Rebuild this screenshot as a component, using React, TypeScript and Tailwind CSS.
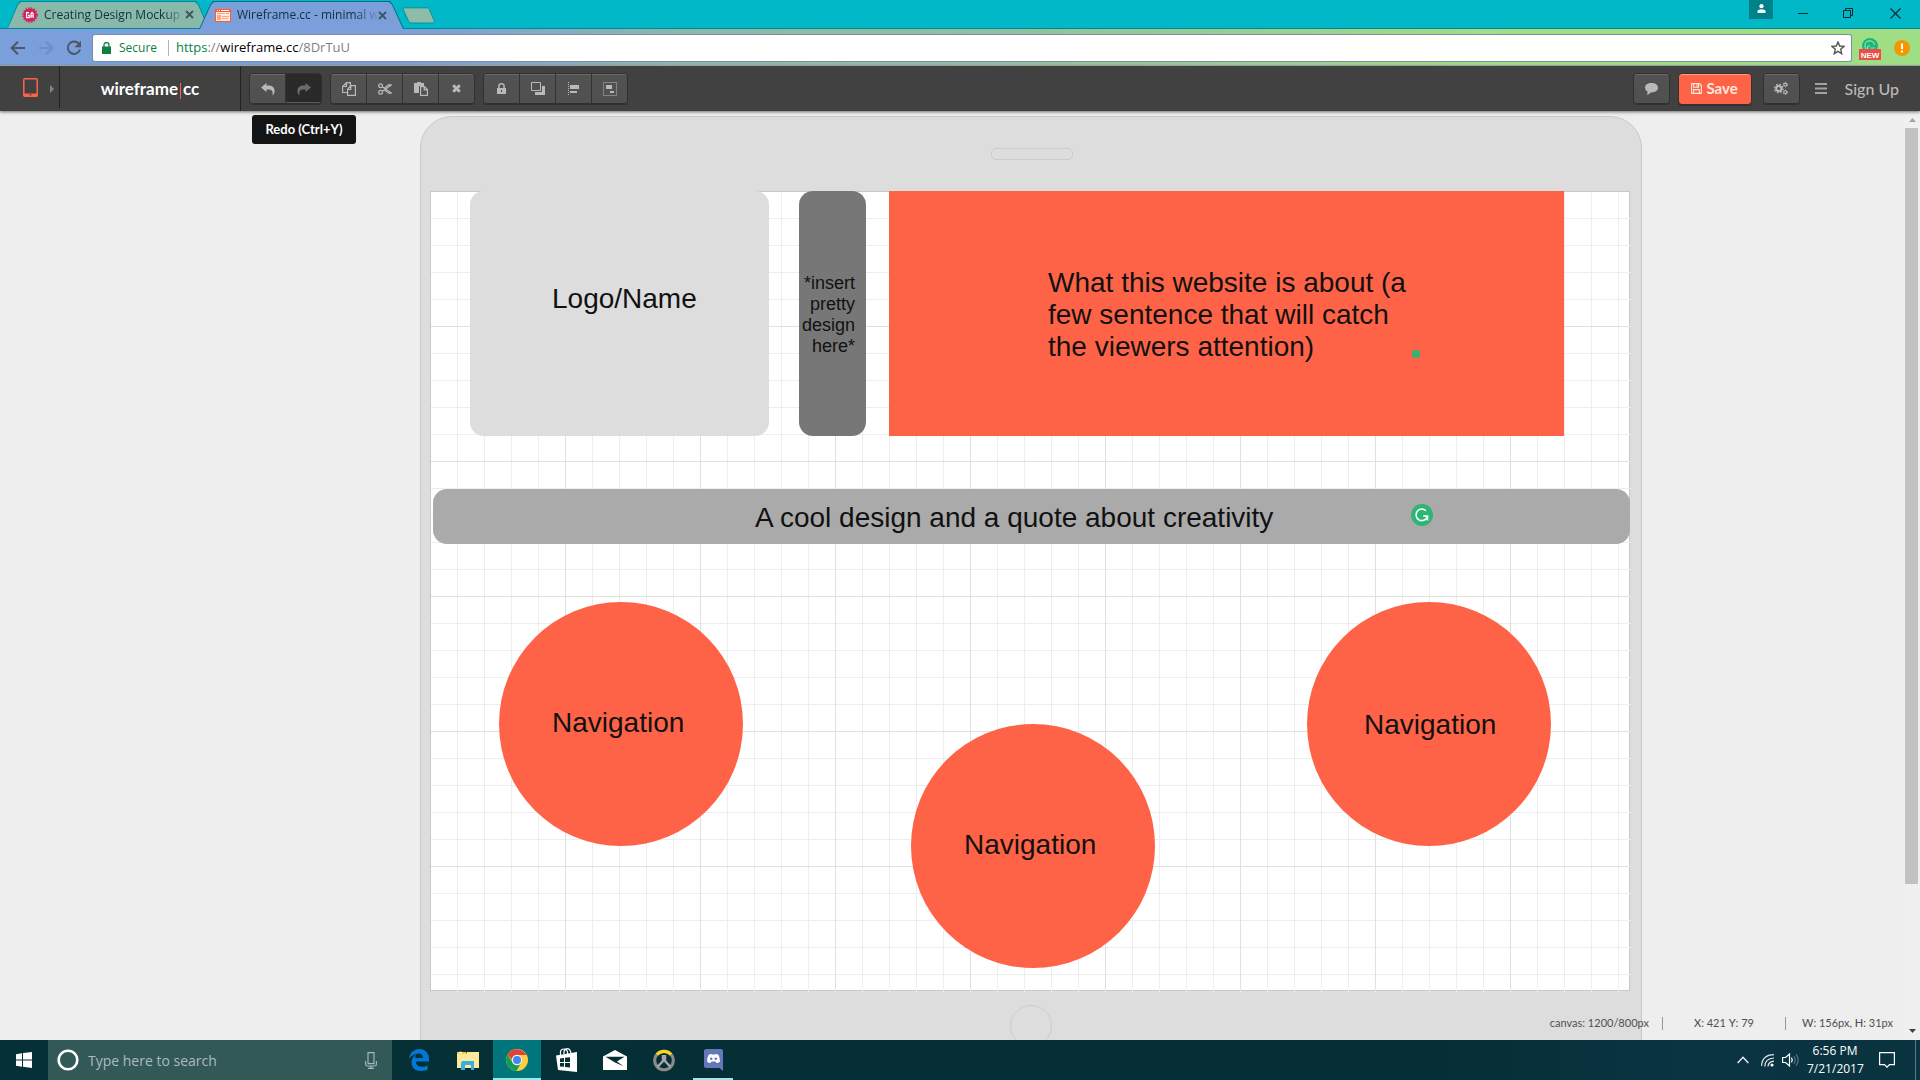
import type { ReactNode } from "react";

const UI_FONT = "font-['Open_Sans','Noto_Sans',sans-serif]";
const LATO = "font-[Lato,sans-serif]";
const ARIAL = "font-['Liberation_Sans',Arial,sans-serif]";

/* ---------- Browser chrome ---------- */

function CloseGlyph() {
  return (
    <svg width="9" height="9" viewBox="0 0 9 9" stroke="#3f5560" strokeWidth="1.8">
      <path d="M1 1l7 7M8 1l-7 7" />
    </svg>
  );
}

function GaFavicon() {
  return (
    <svg width="16" height="16" viewBox="0 0 16 16">
      <circle cx="8" cy="8" r="6.6" fill="#d3215a" />
      <circle cx="8" cy="8" r="7" fill="none" stroke="#d3215a" strokeWidth="1.6" strokeDasharray="1.6 1.2" />
      <path d="M7.2 5.6H4.6v5h2.6V8.4H6M9 11V6.8l1-1.4 1.2 1.4V11M9 8.8h2.2" fill="none" stroke="#fff" strokeWidth="1.2" />
    </svg>
  );
}

function WireframeFavicon() {
  return (
    <svg width="16" height="13" viewBox="0 0 16 13">
      <path fill="#ff5b22" d="M0 0h16v13H0z" />
      <path fill="#fff" d="M2 1h1v1H2zM4 1h1v1H4zM6 1h8v1H6z" />
      <path fill="#ffe9df" d="M1 3h14v9H1z" />
      <path fill="#ffa582" d="M2 4h8v1H2zM2 6h4v5H2zM7 7h7v1H7zM7 9h6v1H7zM11 4h3v1h-3z" />
    </svg>
  );
}

function TabStrip() {
  return (
    <div className={`flex h-[29px] items-stretch bg-[#00b8c7] pl-[7px] shadow-[inset_0_-1px_0_#008793] ${UI_FONT} text-[12px] text-[#12313c]`}>
      <div className="mt-px w-[202px] bg-[#008793] [clip-path:polygon(0_100%,10px_4px,13px_0,189px_0,192px_4px,100%_100%)]">
        <div className="flex h-[27px] items-center bg-[#89b9aa] pr-[12px] pl-[15px] [clip-path:polygon(1px_100%,11px_4px,14px_1px,188px_1px,191px_4px,201px_100%)]">
          <GaFavicon />
          <a href="#mockup" className="ml-[6px] w-[141px] whitespace-nowrap [mask-image:linear-gradient(to_right,#000_120px,transparent_142px)]">
            Creating Design Mockup
          </a>
          <button aria-label="Close tab"><CloseGlyph /></button>
        </div>
      </div>
      <div className="mt-px -ml-[10px] w-[205px] bg-[#00707d] [clip-path:polygon(0_100%,11px_4px,14px_0,191px_0,194px_4px,100%_100%)]">
        <div className="flex h-[28px] items-center bg-[#7a9fda] pl-[16px] [clip-path:polygon(1px_100%,12px_4px,15px_1px,190px_1px,193px_4px,204px_100%)]">
          <WireframeFavicon />
          <a href="#wireframe" className="ml-[6px] w-[141px] whitespace-nowrap [mask-image:linear-gradient(to_right,#000_118px,transparent_142px)]">
            Wireframe.cc - minimal w
          </a>
          <button aria-label="Close tab"><CloseGlyph /></button>
        </div>
      </div>
      <button aria-label="New tab" className="mt-[7px] -ml-[2px] h-[17px]">
        <svg width="34" height="17" viewBox="0 0 34 17">
          <path d="M2 .8h23q1.500 0 2.400 1.500l5 12q.6 1.700-1 1.700H9q-1.500 0-2.300-1.500L1.200 2.500Q.7.8 2 .8z" fill="#8dbca9" stroke="#0a8e98" />
        </svg>
      </button>
      <div className="ml-auto flex items-start">
        <button aria-label="Profile" className="flex h-[19px] w-[24px] items-center justify-center bg-[#008089]">
          <svg width="9" height="9" viewBox="0 0 9 9" fill="#fff" className="-mt-[3px]">
            <circle cx="4.500" cy="2.200" r="2.100" />
            <path d="M.5 9V7.200Q1 5.400 4.500 5.300 8 5.400 8.500 7.200V9z" />
          </svg>
        </button>
        <button aria-label="Minimize" className="ml-[7px] flex h-[26px] w-[46px] items-center justify-center">
          <svg width="10" height="10" stroke="#06282b"><path d="M0 5.500h10" /></svg>
        </button>
        <button aria-label="Restore" className="flex h-[26px] w-[44px] items-center justify-center">
          <svg width="10" height="10" fill="none" stroke="#06282b"><path d="M.5 2.500h7v7h-7zM2.500 2.500v-2h7v7h-2" /></svg>
        </button>
        <button aria-label="Close" className="flex h-[26px] w-[50px] items-center justify-center">
          <svg width="11" height="11" stroke="#06282b" strokeWidth="1.1"><path d="M.5.5l10 10M10.500.5l-10 10" /></svg>
        </button>
      </div>
    </div>
  );
}

function AddressBar() {
  return (
    <div className={`flex h-[37px] items-center border-b border-[#a9b0a9] bg-[linear-gradient(to_right,#7a9fda_0,#7a9fda_400px,#8abaa9_700px,#8fc19f_1000px,#a0de86_1500px)] pt-px pl-[10px] ${UI_FONT}`}>
      <button aria-label="Back">
        <svg width="15" height="14" viewBox="0 0 15 14" fill="none" stroke="#4f5661" strokeWidth="2"><path d="M15 7H2M8 .8L1.600 7 8 13.200" /></svg>
      </button>
      <button aria-label="Forward" className="ml-[14px]">
        <svg width="15" height="14" viewBox="0 0 15 14" fill="none" stroke="#6d8ec4" strokeWidth="2"><path d="M0 7h13M7 .8L13.400 7 7 13.200" /></svg>
      </button>
      <button aria-label="Reload" className="ml-[12px]">
        <svg width="16" height="16" viewBox="0 0 16 16"><path d="M12.600 3.500A6.200 6.200 0 1 0 14 9.500" fill="none" stroke="#4f5661" strokeWidth="2" /><path d="M15 .8v6.400H8.600z" fill="#4f5661" /></svg>
      </button>
      <div className="mr-[18px] ml-[10px] flex h-[28px] flex-1 items-center rounded-[3px] border border-[#59728f]/80 bg-white pr-[6px] pl-[9px]">
        <svg width="9" height="12" viewBox="0 0 9 12"><path d="M0 4.500h9V12H0z" fill="#0b8043" /><path d="M2 5V3a2.500 2.500 0 0 1 5 0v2" fill="none" stroke="#0b8043" strokeWidth="1.300" /></svg>
        <span className="ml-[8px] w-[40px] text-[12px] text-[#0b8043]">Secure</span>
        <span className="ml-[9px] h-[16px] w-px bg-[#b4b4b4]" />
        <div className="ml-[7px] flex-1 text-[13px] text-[#7f7f7f]" aria-label="Address">
          <span className="text-[#0b8043]">https</span>://<span className="text-black">wireframe.cc</span>/8DrTuU
        </div>
        <button aria-label="Bookmark">
          <svg width="14" height="14" viewBox="0 0 14 14" fill="none" stroke="#555" strokeWidth="1.400"><path d="M7 1l1.700 4 4.300.4-3.300 2.900 1 4.400L7 10.400l-3.700 2.300 1-4.400L1 5.400 5.300 5z" /></svg>
        </button>
      </div>
      <button aria-label="Grammarly" className="mt-[3px] -ml-[11px]">
        <svg width="22" height="22" viewBox="0 0 22 22">
          <circle cx="11" cy="8" r="8" fill="#1fb573" />
          <path d="M15.500 7A4.800 4.800 0 1 0 11 12.500M15.500 10h-4M11 7.500a2.500 2.500 0 0 0-2 4" fill="none" stroke="#8fe3ba" strokeWidth="1.200" />
          <path d="M0 11h22v11H0z" fill="#ea4e45" />
          <text x="11" y="20" textAnchor="middle" fontFamily="Liberation Sans, sans-serif" fontSize="8" fontWeight="bold" fill="#fff">NEW</text>
        </svg>
      </button>
      <button aria-label="Alert" className="mr-[10px] ml-[13px]">
        <svg width="16" height="16" viewBox="0 0 16 16"><circle cx="8" cy="8" r="8" fill="#f29900" /><path d="M7 3.500h2v5.500H7zM7 10.500h2v2H7z" fill="#fff" /></svg>
      </button>
    </div>
  );
}

/* ---------- Application toolbar ---------- */

function ToolButton({ label, disabled, children }: { label: string; disabled?: boolean; children: ReactNode }) {
  return (
    <button
      aria-label={label}
      className={
        disabled
          ? "flex h-full flex-1 items-center justify-center bg-[#292929] text-[#6a6a6a] shadow-[inset_0_-1px_0_#5a5a5a]"
          : "flex h-full flex-1 items-center justify-center border-r border-[#333] bg-[linear-gradient(#525252,#505050)] text-[#b9b9b9] shadow-[inset_0_1px_0_#6a6a6a] last:border-r-0"
      }
    >
      {children}
    </button>
  );
}

function ToolGroup({ width, children }: { width: string; children: ReactNode }) {
  return (
    <div className={`${width} flex h-[31px] overflow-hidden rounded-[4px] border border-[#303030] shadow-[0_1px_0_#303030]`}>{children}</div>
  );
}

const UndoArrow = ({ flip }: { flip?: boolean }) => (
  <svg width="14" height="12" viewBox="0 0 14 12" fill="currentColor" className={flip ? "-scale-x-100" : ""}>
    <path d="M0 4.500L5.500 0v2.500h3Q13.500 3 13.600 8q0 2.500-1.300 4-.2.300-.7 0-.2-.2 0-.7Q12.200 6.800 8 6.500H5.500V9z" />
  </svg>
);

function AppToolbar() {
  return (
    <header className={`relative z-10 flex h-[45px] items-center bg-[#414141] shadow-[0_1px_3px_rgba(0,0,0,.55)] ${LATO}`}>
      <button aria-label="Device" className="flex h-[42px] w-[60px] items-center self-start border-r border-[#222] pl-[23px]">
        <svg width="15" height="19" viewBox="0 0 15 19"><rect x=".8" y=".8" width="13.400" height="17.400" rx="1" fill="none" stroke="#ff6347" strokeWidth="1.500" /><path d="M1 15.500h13V18H1z" fill="#ff6347" /><path d="M6.500 16.300h2v1h-2z" fill="#414141" /></svg>
        <svg width="4" height="8" viewBox="0 0 4 8" className="mt-[3px] ml-[12px]"><path d="M0 0l4 4-4 4z" fill="#858585" /></svg>
      </button>
      <a href="#home" className="flex h-full w-[181px] items-center justify-center border-r border-[#222] pt-px text-[17px] font-bold text-white">
        wireframe<span className="mx-[2px] mt-[3px] h-[16px] w-px bg-[#ff6347]" />cc
      </a>
      <div className="ml-[8px] flex gap-[8px]">
        <div className="relative">
          <ToolGroup width="w-[73px]">
            <ToolButton label="Undo"><UndoArrow /></ToolButton>
            <ToolButton label="Redo" disabled><UndoArrow flip /></ToolButton>
          </ToolGroup>
          <div role="tooltip" className="absolute top-[42px] left-[3px] h-[29px] w-[104px] rounded-[3px] bg-[#141414] text-center text-[13px] leading-[28px] font-bold whitespace-nowrap text-white">
            Redo (Ctrl+Y)
          </div>
        </div>
        <ToolGroup width="w-[145px]">
          <ToolButton label="Duplicate">
            <svg width="14" height="14" viewBox="0 0 14 14" fill="none" stroke="currentColor" strokeWidth="1.200"><path d="M6 10.500H.6V4.500L4.500.6h3.900v3M4.500.6v3.900H.6M5.600 13.400V7.500l3-3.900h4.800v9.800zM8.800 3.600v3.900H5.600" /></svg>
          </ToolButton>
          <ToolButton label="Cut">
            <svg width="14" height="12" viewBox="0 0 14 12" fill="none" stroke="currentColor" strokeWidth="1.200"><circle cx="2.600" cy="2.800" r="1.900" /><circle cx="2.600" cy="9.200" r="1.900" /><path d="M4.300 3.800L13.300 10l-2.300.4-4.200-3.200M4.300 8.200L13.300 2 11 1.600 6.800 4.800" /></svg>
          </ToolButton>
          <ToolButton label="Paste">
            <svg width="14" height="14" viewBox="0 0 14 14"><path d="M0 1h3V0h4v1h3v3H5v7H0z" fill="currentColor" /><path d="M6.600 4.600h3.800l3 3v5.800H6.600zM10.200 4.600v3.200h3.200" fill="none" stroke="currentColor" strokeWidth="1.200" /></svg>
          </ToolButton>
          <ToolButton label="Delete">
            <svg width="9" height="9" viewBox="0 0 9 9" stroke="currentColor" strokeWidth="3"><path d="M1.200 1.200l6.600 6.600M7.800 1.200L1.200 7.800" /></svg>
          </ToolButton>
        </ToolGroup>
        <ToolGroup width="w-[145px]">
          <ToolButton label="Lock">
            <svg width="9" height="11" viewBox="0 0 9 11"><path d="M0 5h9v6H0z" fill="currentColor" /><path d="M1.900 5V3a2.600 2.200 0 0 1 5.200 0v2" fill="none" stroke="currentColor" strokeWidth="1.500" /><path d="M4 7h1v2H4z" fill="#444" /></svg>
          </ToolButton>
          <ToolButton label="Arrange">
            <svg width="14" height="14" viewBox="0 0 14 14"><path d="M.5.5h9v8h-9z" fill="none" stroke="currentColor" /><path d="M11 4h3v9H4v-3h7z" fill="currentColor" /></svg>
          </ToolButton>
          <ToolButton label="Align">
            <svg width="12" height="14" viewBox="0 0 12 14"><path d="M.5 0v14" stroke="currentColor" strokeDasharray="1 1" /><path d="M2 3h9v4H2zM2 9h7v2H2z" fill="currentColor" /></svg>
          </ToolButton>
          <ToolButton label="Group">
            <svg width="14" height="14" viewBox="0 0 14 14"><path d="M.5.5h13v13H.5z" fill="none" stroke="currentColor" strokeDasharray="1 1" /><path d="M3 3h6v4H3zM7 9h4v2H7z" fill="currentColor" /></svg>
          </ToolButton>
        </ToolGroup>
      </div>
      <div className="ml-auto flex items-center">
        <ToolGroup width="w-[37px]">
          <ToolButton label="Comments">
            <svg width="13" height="12" viewBox="0 0 13 12" fill="currentColor"><path d="M6.500 0C10.500 0 13 2 13 4.700S10.500 9.400 6.500 9.400H5.800Q4 11.600 1.500 11.700q1.200-1.200 1.100-3Q0 7.300 0 4.700C0 2 2.500 0 6.500 0z" /></svg>
          </ToolButton>
        </ToolGroup>
        <button className="ml-[8px] flex h-[32px] w-[74px] items-center justify-center gap-[4px] rounded-[4px] border border-[#333] bg-[#ff6347] text-[15px] font-bold text-[#ffe6df] shadow-[inset_0_1px_0_#ff9c89,0_1px_0_#2e2e2e]">
          <svg width="11" height="11" viewBox="0 0 11 11" fill="none" stroke="currentColor" strokeWidth="1.100"><path d="M.6.6h7.800l2 2v7.800H.6zM2.600.6v3.600h5V.6M2.600 10.400V6.600h5.800v3.800M6 1.500v2" /></svg>
          Save
        </button>
        <div className="ml-[11px]">
          <ToolGroup width="w-[37px]">
            <ToolButton label="Settings">
              <svg width="14" height="13" viewBox="0 0 14 13" fill="none" stroke="currentColor">
                <circle cx="4.800" cy="6.500" r="2.600" strokeWidth="2" /><circle cx="4.800" cy="6.500" r="4.200" strokeWidth="1.300" strokeDasharray="1.700 1.600" />
                <circle cx="11.300" cy="2.600" r="1.500" strokeWidth="1.100" /><circle cx="11.300" cy="2.600" r="2.200" strokeDasharray="1 1.300" />
                <circle cx="11.300" cy="10.300" r="1.500" strokeWidth="1.100" /><circle cx="11.300" cy="10.300" r="2.200" strokeDasharray="1 1.300" />
              </svg>
            </ToolButton>
          </ToolGroup>
        </div>
        <button aria-label="Menu" className="ml-[15px]">
          <svg width="12" height="11" viewBox="0 0 12 11" fill="#a3a3a3"><path d="M0 0h12v2H0zM0 4.500h12v2H0zM0 9h12v2H0z" /></svg>
        </button>
        <a href="#signup" className="mr-[21px] ml-[18px] text-[16px] font-medium text-[#b9b9b9]">Sign Up</a>
      </div>
    </header>
  );
}

/* ---------- Wireframe canvas ---------- */

const shapes = [
  "left-[40px] top-0 h-[245px] w-[299px] rounded-[14px] bg-[#ddd]",
  "left-[369px] top-0 h-[245px] w-[67px] rounded-[14px] bg-[#777]",
  "left-[459px] top-0 h-[245px] w-[675px] bg-[#ff6347]",
  "left-[3px] top-[298px] h-[55px] w-[1197px] rounded-[14px] bg-[#aaa]",
  "left-[69px] top-[411px] size-[244px] rounded-full bg-[#ff6347]",
  "left-[481px] top-[533px] size-[244px] rounded-full bg-[#ff6347]",
  "left-[877px] top-[411px] size-[244px] rounded-full bg-[#ff6347]",
];

const labels = [
  { text: "Logo/Name", at: "left-[122px] top-[92px]" },
  { text: "A cool design and a quote about creativity", at: "left-[325px] top-[311px]" },
  { text: "Navigation", at: "left-[122px] top-[516px]" },
  { text: "Navigation", at: "left-[534px] top-[638px]" },
  { text: "Navigation", at: "left-[934px] top-[518px]" },
];

function Canvas() {
  return (
    <div className={`relative h-[800px] w-[1200px] bg-white ring-1 ring-[#c8c8c8] ring-inset ${ARIAL} text-[28px] leading-[32px] text-[#111]`}>
      <div className="absolute top-px -right-px -bottom-px left-px bg-[linear-gradient(to_right,#eee_1px,transparent_1px),linear-gradient(#eee_1px,transparent_1px)] bg-[size:27px_27px] bg-[position:26px_26px]" />
      <div className="absolute inset-px bg-[linear-gradient(to_right,#e0e0e0_1px,transparent_1px),linear-gradient(#e0e0e0_1px,transparent_1px)] bg-[size:135px_135px] bg-[position:134px_134px]" />
      {shapes.map((shape) => (
        <div key={shape} className={`absolute ${shape}`} />
      ))}
      {labels.map(({ text, at }) => (
        <p key={at} className={`absolute whitespace-nowrap ${at}`}>{text}</p>
      ))}
      <p className="absolute top-[82px] left-[365px] w-[60px] text-right text-[18px] leading-[21px]">*insert pretty design here*</p>
      <p className="absolute top-[76px] left-[618px] w-[370px]">What this website is about (a few sentence that will catch the viewers attention)</p>
      <span className="absolute top-[159px] left-[982px] size-[8px] rounded-full bg-[#2bb673]" />
      <svg className="absolute top-[313px] left-[981px]" width="22" height="22" viewBox="0 0 22 22">
        <circle cx="11" cy="11" r="11" fill="#2bb673" />
        <path d="M15 6.800A5.800 5.800 0 1 0 16.200 13M12.200 12h4.300v4.500" fill="none" stroke="#fff" strokeWidth="1.600" />
      </svg>
    </div>
  );
}

function StatusBar() {
  return (
    <div className={`absolute right-[11px] bottom-[9px] flex items-center ${LATO} text-[11px] leading-[16px] text-[#505050]`}>
      <span>canvas: 1200/800px</span>
      <span className="ml-[13px] h-[13px] w-px bg-[#999]" />
      <span className="w-[122px] text-center"><b className="font-medium">X</b>: 421 <b className="font-medium">Y</b>: 79</span>
      <span className="mr-[16px] h-[13px] w-px bg-[#999]" />
      <span><b className="font-medium">W</b>: 156px, <b className="font-medium">H</b>: 31px</span>
    </div>
  );
}

function Workspace() {
  return (
    <main className="flex min-h-0 flex-1 bg-[#eee]">
      <div className="relative flex-1 overflow-hidden pt-[5px] pl-[420px]">
        <div className="flex h-[1000px] w-[1222px] flex-col rounded-[32px] border border-[#c8c8c8] bg-[#ddd] pl-[9px]">
          <div className="flex h-[74px] shrink-0 justify-center pt-[31px] pr-[7px]">
            <span className="h-[12px] w-[82px] rounded-[5px] border border-[#ccc]" />
          </div>
          <Canvas />
          <button aria-label="Home" className="mt-[14px] ml-[580px] size-[42px] shrink-0 rounded-full border border-[#ccc]" />
        </div>
        <StatusBar />
      </div>
      <div className="flex w-[16px] flex-col items-center bg-[#f0f0f0]">
        <svg width="7" height="4" viewBox="0 0 7 4" className="mt-[7px] shrink-0"><path d="M0 4l3.500-4L7 4z" fill="#a3a3a3" /></svg>
        <div className="mt-[6px] mr-px h-[756px] w-[13px] bg-[#c1c1c1]" />
        <svg width="7" height="4" viewBox="0 0 7 4" className="mt-auto mb-[7px] shrink-0"><path d="M0 0l3.500 4L7 0z" fill="#404040" /></svg>
      </div>
    </main>
  );
}

/* ---------- Windows taskbar ---------- */

const taskIcons: { name: string; box: string; icon: ReactNode }[] = [
  {
    name: "Edge",
    box: "",
    icon: (
      <svg width="20" height="22" viewBox="0 0 20 22"><path d="M0 9.500C1 3.500 5 0 10.500 0 16.500 0 20 4.500 20 10v2.600H6.700c.2 3.600 3 5.200 6 5.200 2.300 0 4.300-.6 5.900-1.600v4.400C16.800 21.600 14.500 22 12 22 6.300 22 2.500 18.700 2.500 13.500c0-3.600 2-6.400 5-7.900-.8.900-1.200 2-1.300 3.400h7.700c0-2.600-1.300-4.400-4.200-4.400C6 4.600 2.200 6.800 0 9.500z" fill="#0078d7" /></svg>
    ),
  },
  {
    name: "File Explorer",
    box: "",
    icon: (
      <svg width="22" height="19" viewBox="0 0 22 19"><path d="M0 1h9v3H0z" fill="#ffc83d" /><path d="M2 .8h3v1.400H2z" fill="#fff" /><path d="M0 3h9l1-2h12v16H0z" fill="#ffe79b" /><path d="M5 10h12v9h-3v-5H8v5H4v-7z" fill="#3aaee0" /></svg>
    ),
  },
  {
    name: "Chrome",
    box: "bg-[#00757b] border-b-2 border-[#9ce8ee] pt-[2px]",
    icon: (
      <svg width="22" height="22" viewBox="0 0 22 22"><circle cx="11" cy="11" r="11" fill="#ffcd40" /><path d="M1.500 5.500A11 11 0 0 1 20.500 6H11a5 5 0 0 0-5 5z" fill="#db4437" /><path d="M1.500 5.500A11 11 0 0 0 10.400 22l4.800-8.300A5 5 0 0 1 6.600 13.500z" fill="#0f9d58" /><circle cx="11" cy="11" r="5.200" fill="#f1f1f1" /><circle cx="11" cy="11" r="4" fill="#4285f4" /></svg>
    ),
  },
  {
    name: "Store",
    box: "",
    icon: (
      <svg width="21" height="24" viewBox="0 0 21 24"><path d="M0 7.500L21 4v20L2 22z" fill="#fff" /><path d="M4.500 7V3.500Q5 1 8 1t3.500 3v2M8 6V3.500Q9 .7 11.500.7T15 5" fill="none" stroke="#fff" strokeWidth="1.200" /><path d="M4 10.500l4-.5v4H4zM9 9.800l5-.6V14H9zM4 15h4v3.800l-4-.4zM9 15h5v4.500L9 19z" fill="#053036" /></svg>
    ),
  },
  {
    name: "Mail",
    box: "",
    icon: (
      <svg width="24" height="20" viewBox="0 0 24 20"><path d="M0 6.500L12 0l12 6.500V20H0z" fill="#fff" /><path d="M2.500 6.800h19L14 11.500l6.500 4.700L12 12.500z" fill="#053036" /></svg>
    ),
  },
  {
    name: "Overwatch",
    box: "",
    icon: (
      <svg width="22" height="23" viewBox="0 0 22 23" fill="none"><circle cx="11" cy="11.500" r="9.300" stroke="#8b8b8b" strokeWidth="3" /><path d="M4 5.500a9.300 9.300 0 0 1 14 0" stroke="#ffd21f" strokeWidth="3.200" /><path d="M10 6v6L4.500 18M12 6v6l5.500 6" stroke="#a5a5a5" strokeWidth="2.400" /></svg>
    ),
  },
  {
    name: "Discord",
    box: "",
    icon: (
      <svg width="19" height="22" viewBox="0 0 19 22"><path d="M2 0h15q2 0 2 2v20l-3.500-3H2q-2 0-2-2V2q0-2 2-2z" fill="#6577b8" /><path d="M4.500 6Q7 4.500 8 5.500h3Q12 4.500 14.500 6q1.500 3 1.500 6.500-1.500 1.500-3.500 1.500L11.500 12.500h-4L6.500 14Q4.500 14 3 12.500 3 9 4.500 6z" fill="#fff" /><circle cx="7.200" cy="9.700" r="1.300" fill="#6577b8" /><circle cx="11.800" cy="9.700" r="1.300" fill="#6577b8" /></svg>
    ),
  },
];

function Taskbar() {
  return (
    <footer className={`flex h-[40px] items-stretch bg-[linear-gradient(to_right,#053036_0,#052e35_75%,#0a3442_88%,#0a3340_100%)] ${UI_FONT}`}>
      <button aria-label="Start" className="flex w-[48px] items-center justify-center">
        <svg width="16" height="16" viewBox="0 0 16 16" fill="#fff"><path d="M0 2.200L6 1.300v6.200H0zM7 1.100L16 0v7.500H7zM0 8.500h6v6.200l-6-.9zM7 8.500h9V16l-9-1.200z" /></svg>
      </button>
      <label className="flex w-[344px] items-center bg-[#335858] pl-[9px]">
        <svg width="22" height="22" viewBox="0 0 22 22"><circle cx="11" cy="11" r="9.300" fill="none" stroke="#fff" strokeWidth="2.600" /></svg>
        <input aria-label="Search" placeholder="Type here to search" className="ml-[9px] min-w-0 flex-1 bg-transparent text-[14px] text-[#a9bcbc] outline-none placeholder:text-[#a9bcbc]" />
        <svg width="12" height="17" viewBox="0 0 12 17" fill="none" stroke="#a9bcbc" strokeWidth="1.100" className="mr-[15px]"><path d="M3 .6h6v11H3zM.6 9v3.200q0 1.800 2 1.800h6.800q2 0 2-1.800V9M6 14v2.300M3 16.400h6" /></svg>
      </label>
      <nav className="ml-[3px] flex gap-px">
        {taskIcons.map(({ name, box, icon }) => (
          <button key={name} aria-label={name} className={`relative flex w-[48px] items-center justify-center ${box}`}>
            {icon}
            {name === "Discord" && <span className="absolute bottom-0 left-[4px] h-[2px] w-[40px] bg-[#9ce8ee]" />}
          </button>
        ))}
      </nav>
      <div className="ml-auto flex items-center">
        <svg width="12" height="8" viewBox="0 0 12 8" fill="none" stroke="#e8eeee" strokeWidth="1.400"><path d="M.6 7L6 1.200 11.400 7" /></svg>
        <svg width="13" height="13" viewBox="0 0 13 13" fill="none" stroke="#dfe7e7" strokeWidth="1.200" className="ml-[12px]"><path d="M.6 12Q1 1 13 .7M3.800 12.500Q4 4.500 13 4M7 12.600Q7.200 7.800 13 7.200" /><circle cx="11" cy="11" r="1.600" fill="#fff" stroke="none" /></svg>
        <svg width="17" height="14" viewBox="0 0 17 14" fill="none" stroke="#fff" strokeWidth="1.200" className="ml-[8px]"><path d="M.6 4.500h3L7.500 1v12l-3.900-3.500h-3z" /><path d="M9.500 4.700q1.500 2.300 0 4.600" /><path d="M11.800 3q3 4 0 8M14.200 1.300q4 5.700 0 11.400" stroke="#547580" /></svg>
        <div className="ml-[8px] w-[56px] text-center text-[12px] leading-[18px] text-white">
          <div>6:56 PM</div>
          <div>7/21/2017</div>
        </div>
        <button aria-label="Notifications" className="ml-[16px]">
          <svg width="16" height="16" viewBox="0 0 16 16" fill="none" stroke="#fff" strokeWidth="1.200"><path d="M.6.6h14.800v12H10.500L8 15.200 5.500 12.600H.6z" /></svg>
        </button>
        <span className="mr-[4px] ml-[20px] h-[40px] w-px bg-[#5d787f]" />
      </div>
    </footer>
  );
}

export default function App() {
  return (
    <div className="flex h-screen flex-col overflow-hidden">
      <TabStrip />
      <AddressBar />
      <AppToolbar />
      <Workspace />
      <Taskbar />
    </div>
  );
}
